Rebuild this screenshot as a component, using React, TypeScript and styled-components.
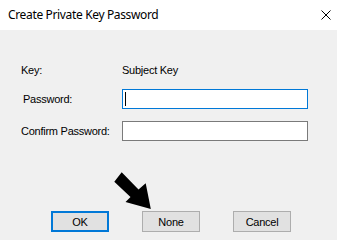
import React from "react";
import styled, { createGlobalStyle } from "styled-components";

const Global = createGlobalStyle`
  html, body { margin: 0; padding: 0; background: #f0f0f0; }
  body { width: 337px; height: 240px; overflow: hidden; }
`;

const Window = styled.div`
  position: relative;
  width: 337px;
  height: 240px;
  display: flex;
  flex-direction: column;
  background: #f0f0f0;
  font-family: "Liberation Sans", Arial, sans-serif;
  font-size: 11px;
  letter-spacing: -0.25px;
  color: #000;
`;

const TitleBar = styled.div`
  height: 30px;
  flex: none;
  background: #fff;
  display: flex;
  align-items: center;
  justify-content: space-between;
  padding: 0 6px 0 8px;
  box-sizing: border-box;
`;

const Title = styled.span`
  font-family: "Noto Sans", "Open Sans", sans-serif;
  font-size: 12px;
  letter-spacing: -0.35px;
  color: #000;
  line-height: 16px;
`;

const CloseBox = styled.div`
  width: 10px;
  height: 10px;
  display: flex;
`;

const Body = styled.div`
  flex: 1;
  padding: 32px 0 0 21px;
  display: flex;
  flex-direction: column;
`;

const Form = styled.div`
  display: grid;
  grid-template-columns: 101px 186px;
  grid-template-rows: 15px 20px 20px;
  row-gap: 12px;
  align-items: center;
`;

const Label = styled.span<{ $indent?: number }>`
  line-height: 14px;
  padding-left: ${(p) => p.$indent ?? 0}px;
  white-space: nowrap;
`;

const Field = styled.div<{ $focused?: boolean }>`
  height: 20px;
  box-sizing: border-box;
  background: #fff;
  border: 1px solid ${(p) => (p.$focused ? "#0078d7" : "#7a7a7a")};
  display: flex;
  align-items: center;
`;

const Caret = styled.span`
  display: block;
  width: 1px;
  height: 14px;
  margin-left: 2px;
  background: #000;
`;

const Buttons = styled.div`
  display: flex;
  gap: 33px;
  margin-top: 70px;
  padding-left: 30px;
`;

const Button = styled.div<{ $default?: boolean }>`
  width: 58px;
  height: 21px;
  box-sizing: border-box;
  background: #e1e1e1;
  border: ${(p) => (p.$default ? "2px solid #0078d7" : "1px solid #adadad")};
  display: flex;
  align-items: center;
  justify-content: center;
  line-height: 14px;
`;

const Arrow = styled.svg`
  position: absolute;
  left: 0;
  top: 0;
  pointer-events: none;
`;

export default function App() {
  return (
    <>
      <Global />
      <Window>
        <TitleBar>
          <Title>Create Private Key Password</Title>
          <CloseBox>
            <svg width="10" height="10" viewBox="0 0 10 10">
              <path d="M0.5 0.5 L9.5 9.5 M9.5 0.5 L0.5 9.5" stroke="#000" strokeWidth="1" />
            </svg>
          </CloseBox>
        </TitleBar>
        <Body>
          <Form>
            <Label>Key:</Label>
            <Label>Subject Key</Label>
            <Label $indent={2}>Password:</Label>
            <Field $focused>
              <Caret />
            </Field>
            <Label>Confirm Password:</Label>
            <Field />
          </Form>
          <Buttons>
            <Button $default>OK</Button>
            <Button>None</Button>
            <Button>Cancel</Button>
          </Buttons>
        </Body>
        <Arrow width="337" height="240" viewBox="0 0 337 240">
          <polygon
            points="121.7,172.3 114.3,181.7 130.5,197 125.5,202 150.8,209 145.7,183.3 138.5,189.5"
            fill="#000"
          />
        </Arrow>
      </Window>
    </>
  );
}
